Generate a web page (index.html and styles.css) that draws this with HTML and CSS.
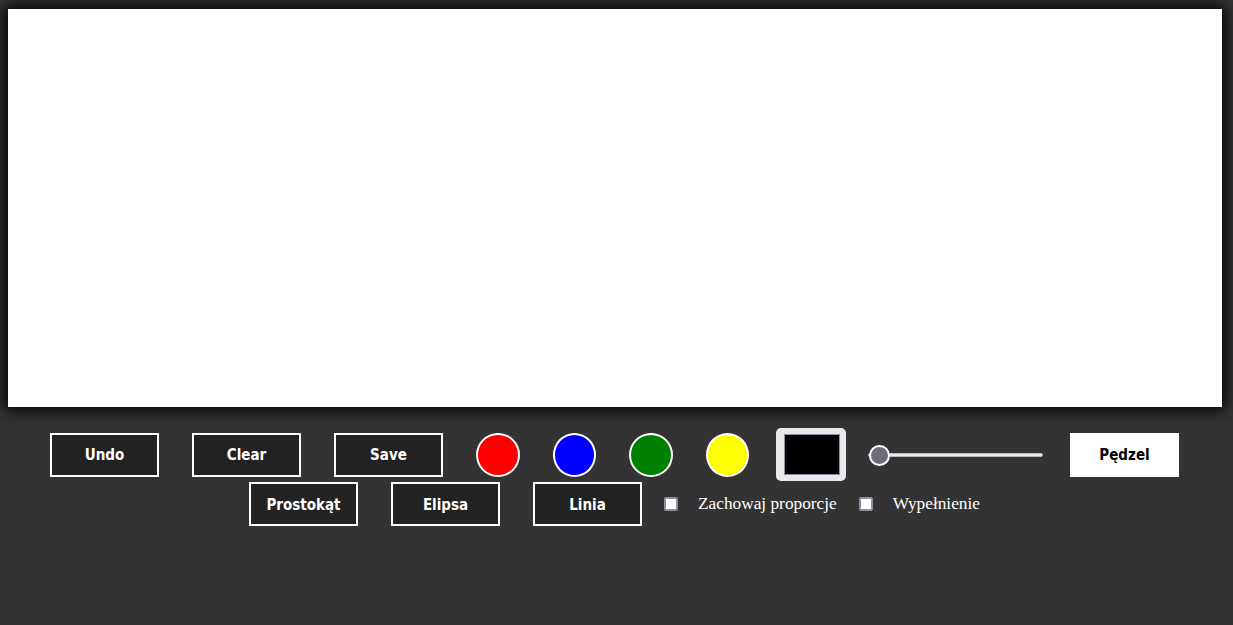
FILE: index.html
```html
<!DOCTYPE html>
<html lang="pl">
<head>
<meta charset="utf-8">
<title>Paint</title>
<link rel="stylesheet" href="styles.css">
</head>
<body>
<div class="board"></div>
<div class="toolbar">
  <div class="row row-top">
    <button class="btn">Undo</button>
    <button class="btn">Clear</button>
    <button class="btn">Save</button>
    <span class="swatch red"></span>
    <span class="swatch blue"></span>
    <span class="swatch green"></span>
    <span class="swatch yellow"></span>
    <input class="picker" type="color" value="#000000">
    <input class="size" type="range" min="1" max="50" value="1">
    <button class="btn btn-active">Pędzel</button>
  </div>
  <div class="row row-bottom">
    <button class="btn">Prostokąt</button>
    <button class="btn">Elipsa</button>
    <button class="btn">Linia</button>
    <label class="opt"><input class="check" type="checkbox"><span>Zachowaj proporcje</span></label>
    <label class="opt"><input class="check" type="checkbox"><span>Wypełnienie</span></label>
  </div>
</div>
</body>
</html>
```

FILE: styles.css
```css
html, body {
  margin: 0;
  padding: 0;
  background: #333333;
  height: 100%;
  overflow: hidden;
}

body {
  font-family: "Liberation Serif", serif;
}

.board {
  margin: 9px 0 0 8px;
  width: 1214px;
  height: 398px;
  background: #ffffff;
  box-shadow: 0 0 14px 3px #000000;
}

.toolbar {
  margin-top: 21px;
  padding-right: 4px;
}

.row {
  display: flex;
  justify-content: center;
  align-items: center;
  gap: 33px;
}

.row-top {
  height: 53px;
}

.row-bottom {
  margin-top: 1px;
  height: 44px;
}

.btn {
  box-sizing: border-box;
  width: 109px;
  height: 44px;
  margin: 0;
  padding: 1px 0 0;
  background: #222222;
  color: #ffffff;
  border: 2px solid #ffffff;
  border-radius: 0;
  font-family: "DejaVu Sans Condensed", "DejaVu Sans", sans-serif;
  font-stretch: condensed;
  font-weight: bold;
  font-size: 15px;
}

.btn-active {
  background: #ffffff;
  color: #000000;
  margin-left: -6px;
}

.swatch {
  box-sizing: border-box;
  width: 43.5px;
  height: 44px;
  border-radius: 50%;
  border: 2px solid #ffffff;
}

.red { background: #ff0000; }
.blue { background: #0000ff; }
.green { background: #008000; }
.yellow { background: #ffff00; }

.picker {
  -webkit-appearance: none;
  appearance: none;
  box-sizing: border-box;
  width: 70px;
  height: 53px;
  margin: 0 0 0 -6px;
  padding: 6px 6px 6px 8px;
  background: #e9e9ed;
  border: none;
  border-radius: 5px;
}

.picker::-webkit-color-swatch-wrapper {
  padding: 0;
}

.picker::-webkit-color-swatch {
  border: 1px solid #8f8f9d;
  border-radius: 0;
}

.size {
  -webkit-appearance: none;
  appearance: none;
  width: 175px;
  height: 20px;
  margin: 0 0 0 -11px;
  padding: 0;
  background: transparent;
}

.size::-webkit-slider-runnable-track {
  height: 4px;
  background: #e9e9ed;
  border: 1px solid #b8b8c4;
  border-radius: 3px;
}

.size::-webkit-slider-thumb {
  -webkit-appearance: none;
  appearance: none;
  box-sizing: border-box;
  width: 21px;
  height: 21px;
  margin-top: -9px;
  border-radius: 50%;
  background: #6d6d7d;
  border: 2px solid #ffffff;
}

.opt {
  display: flex;
  align-items: center;
  gap: 20px;
  color: #ffffff;
  font-size: 17.3px;
  margin-left: -11px;
}

.check {
  -webkit-appearance: none;
  appearance: none;
  box-sizing: border-box;
  width: 14px;
  height: 14px;
  margin: 0;
  background: #ffffff;
  border: 2px solid #8f8f9d;
  border-radius: 2px;
}
```
